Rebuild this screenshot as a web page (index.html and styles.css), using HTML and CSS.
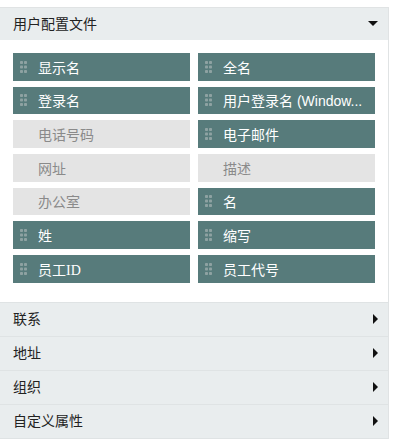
FILE: index.html
```html
<!DOCTYPE html>
<html lang="zh">
<head>
<meta charset="utf-8">
<link rel="stylesheet" href="styles.css">
</head>
<body>
<div class="panel">
  <section class="section open">
    <div class="sec-head">
      <span>用户配置文件</span>
      <span class="tri-down"></span>
    </div>
    <div class="sec-body">
      <div class="field on"><svg class="grip" viewBox="0 0 7 12" width="7" height="12"><g fill="#8ea2a2"><rect x="0" y="0" width="3" height="3" rx="0.8"/><rect x="4" y="0" width="3" height="3" rx="0.8"/><rect x="0" y="4.5" width="3" height="3" rx="0.8"/><rect x="4" y="4.5" width="3" height="3" rx="0.8"/><rect x="0" y="9" width="3" height="3" rx="0.8"/><rect x="4" y="9" width="3" height="3" rx="0.8"/></g></svg><span class="label">显示名</span></div>
      <div class="field on"><svg class="grip" viewBox="0 0 7 12" width="7" height="12"><g fill="#8ea2a2"><rect x="0" y="0" width="3" height="3" rx="0.8"/><rect x="4" y="0" width="3" height="3" rx="0.8"/><rect x="0" y="4.5" width="3" height="3" rx="0.8"/><rect x="4" y="4.5" width="3" height="3" rx="0.8"/><rect x="0" y="9" width="3" height="3" rx="0.8"/><rect x="4" y="9" width="3" height="3" rx="0.8"/></g></svg><span class="label">全名</span></div>
      <div class="field on"><svg class="grip" viewBox="0 0 7 12" width="7" height="12"><g fill="#8ea2a2"><rect x="0" y="0" width="3" height="3" rx="0.8"/><rect x="4" y="0" width="3" height="3" rx="0.8"/><rect x="0" y="4.5" width="3" height="3" rx="0.8"/><rect x="4" y="4.5" width="3" height="3" rx="0.8"/><rect x="0" y="9" width="3" height="3" rx="0.8"/><rect x="4" y="9" width="3" height="3" rx="0.8"/></g></svg><span class="label">登录名</span></div>
      <div class="field on"><svg class="grip" viewBox="0 0 7 12" width="7" height="12"><g fill="#8ea2a2"><rect x="0" y="0" width="3" height="3" rx="0.8"/><rect x="4" y="0" width="3" height="3" rx="0.8"/><rect x="0" y="4.5" width="3" height="3" rx="0.8"/><rect x="4" y="4.5" width="3" height="3" rx="0.8"/><rect x="0" y="9" width="3" height="3" rx="0.8"/><rect x="4" y="9" width="3" height="3" rx="0.8"/></g></svg><span class="label">用户登录名 (Window...</span></div>
      <div class="field off"><span class="label">电话号码</span></div>
      <div class="field on"><svg class="grip" viewBox="0 0 7 12" width="7" height="12"><g fill="#8ea2a2"><rect x="0" y="0" width="3" height="3" rx="0.8"/><rect x="4" y="0" width="3" height="3" rx="0.8"/><rect x="0" y="4.5" width="3" height="3" rx="0.8"/><rect x="4" y="4.5" width="3" height="3" rx="0.8"/><rect x="0" y="9" width="3" height="3" rx="0.8"/><rect x="4" y="9" width="3" height="3" rx="0.8"/></g></svg><span class="label">电子邮件</span></div>
      <div class="field off"><span class="label">网址</span></div>
      <div class="field off"><span class="label">描述</span></div>
      <div class="field off"><span class="label">办公室</span></div>
      <div class="field on"><svg class="grip" viewBox="0 0 7 12" width="7" height="12"><g fill="#8ea2a2"><rect x="0" y="0" width="3" height="3" rx="0.8"/><rect x="4" y="0" width="3" height="3" rx="0.8"/><rect x="0" y="4.5" width="3" height="3" rx="0.8"/><rect x="4" y="4.5" width="3" height="3" rx="0.8"/><rect x="0" y="9" width="3" height="3" rx="0.8"/><rect x="4" y="9" width="3" height="3" rx="0.8"/></g></svg><span class="label">名</span></div>
      <div class="field on"><svg class="grip" viewBox="0 0 7 12" width="7" height="12"><g fill="#8ea2a2"><rect x="0" y="0" width="3" height="3" rx="0.8"/><rect x="4" y="0" width="3" height="3" rx="0.8"/><rect x="0" y="4.5" width="3" height="3" rx="0.8"/><rect x="4" y="4.5" width="3" height="3" rx="0.8"/><rect x="0" y="9" width="3" height="3" rx="0.8"/><rect x="4" y="9" width="3" height="3" rx="0.8"/></g></svg><span class="label">姓</span></div>
      <div class="field on"><svg class="grip" viewBox="0 0 7 12" width="7" height="12"><g fill="#8ea2a2"><rect x="0" y="0" width="3" height="3" rx="0.8"/><rect x="4" y="0" width="3" height="3" rx="0.8"/><rect x="0" y="4.5" width="3" height="3" rx="0.8"/><rect x="4" y="4.5" width="3" height="3" rx="0.8"/><rect x="0" y="9" width="3" height="3" rx="0.8"/><rect x="4" y="9" width="3" height="3" rx="0.8"/></g></svg><span class="label">缩写</span></div>
      <div class="field on"><svg class="grip" viewBox="0 0 7 12" width="7" height="12"><g fill="#8ea2a2"><rect x="0" y="0" width="3" height="3" rx="0.8"/><rect x="4" y="0" width="3" height="3" rx="0.8"/><rect x="0" y="4.5" width="3" height="3" rx="0.8"/><rect x="4" y="4.5" width="3" height="3" rx="0.8"/><rect x="0" y="9" width="3" height="3" rx="0.8"/><rect x="4" y="9" width="3" height="3" rx="0.8"/></g></svg><span class="label">员工<span class="serif">ID</span></span></div>
      <div class="field on"><svg class="grip" viewBox="0 0 7 12" width="7" height="12"><g fill="#8ea2a2"><rect x="0" y="0" width="3" height="3" rx="0.8"/><rect x="4" y="0" width="3" height="3" rx="0.8"/><rect x="0" y="4.5" width="3" height="3" rx="0.8"/><rect x="4" y="4.5" width="3" height="3" rx="0.8"/><rect x="0" y="9" width="3" height="3" rx="0.8"/><rect x="4" y="9" width="3" height="3" rx="0.8"/></g></svg><span class="label">员工代号</span></div>
    </div>
  </section>
  <section class="section">
    <div class="sec-head"><span>联系</span><span class="tri-right"></span></div>
  </section>
  <section class="section">
    <div class="sec-head"><span>地址</span><span class="tri-right"></span></div>
  </section>
  <section class="section">
    <div class="sec-head"><span>组织</span><span class="tri-right"></span></div>
  </section>
  <section class="section">
    <div class="sec-head"><span>自定义属性</span><span class="tri-right"></span></div>
  </section>
</div>
</body>
</html>
```

FILE: styles.css
```css
html, body {
  margin: 0;
  padding: 0;
  background: #ffffff;
}
body {
  padding-top: 7px;
  font-family: "Liberation Sans", "Noto Sans CJK SC", sans-serif;
  font-size: 14px;
  color: #222;
}
.panel {
  width: 388px;
  border-right: 1px solid #e0e3e4;
  border-top: 1px solid #e0e3e4;
  background: #fff;
}
.section {
  border-bottom: 1px solid #dfe3e4;
}
.sec-head {
  height: 33px;
  background: #e9edee;
  display: flex;
  align-items: center;
  justify-content: space-between;
  padding: 0 10px 0 13px;
  line-height: 1;
  color: #222;
}
.section.open .sec-head {
  height: 32px;
}
.tri-down {
  width: 0;
  height: 0;
  border-left: 5px solid transparent;
  border-right: 5px solid transparent;
  border-top: 5px solid #111;
  margin-top: -2px;
}
.tri-right {
  width: 0;
  height: 0;
  border-top: 5px solid transparent;
  border-bottom: 5px solid transparent;
  border-left: 5px solid #111;
}
.sec-body {
  display: grid;
  grid-template-columns: 177px 177px;
  column-gap: 8px;
  row-gap: 6px;
  grid-auto-rows: 27.67px;
  padding: 13px 13px 19px 13px;
  background: #fff;
}
.field {
  display: flex;
  align-items: center;
  padding-left: 7px;
  gap: 11px;
  overflow: hidden;
  white-space: nowrap;
  min-width: 0;
}
.field.on {
  background: #577b7b;
  color: #ffffff;
}
.field.off {
  background: #e4e4e4;
  color: #8a8a8a;
  padding-left: 25px;
}
.grip {
  flex: none;
  display: block;
}
.label {
  white-space: nowrap;
  min-width: 0;
}
.serif {
  font-family: "Liberation Serif", serif;
}
```
